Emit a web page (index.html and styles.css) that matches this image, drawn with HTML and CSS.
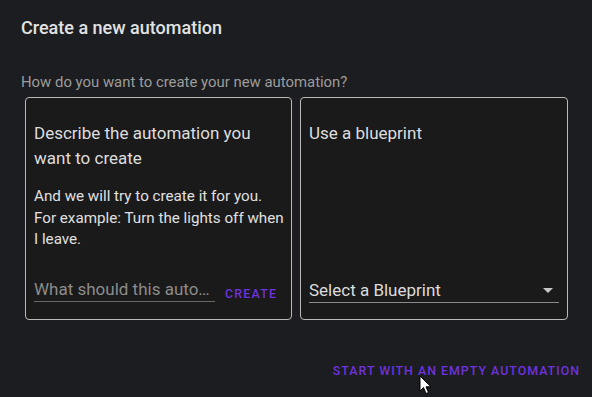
FILE: index.html
```html
<!DOCTYPE html>
<html>
    <head>
        <title>Create a new automation</title>
        <link rel="stylesheet" href="styles.css">
    </head>
<body>
    <div class="dialog">
        <h2 class="dialog-title">Create a new automation</h2>
        <p class="dialog-subtitle">How do you want to create your new automation?</p>

        <div class="options">
            <div class="option-card">
                <div class="card-heading">Describe the automation you want to create</div>
                <div class="card-text">And we will try to create it for you. For example: Turn the lights off when I leave.</div>
                <div class="card-footer">
                    <div class="text-field">What should this auto…</div>
                    <button class="text-button">CREATE</button>
                </div>
            </div>

            <div class="option-card">
                <div class="card-heading">Use a blueprint</div>
                <div class="card-footer">
                    <div class="select-field">
                        <span>Select a Blueprint</span>
                        <svg class="select-arrow" width="10" height="5" viewBox="0 0 10 5">
                            <path d="M0 0 L10 0 L5 5 Z" fill="#c8c8c8"/>
                        </svg>
                    </div>
                </div>
            </div>
        </div>

        <div class="dialog-actions">
            <button class="text-button empty-button">START WITH AN EMPTY AUTOMATION</button>
        </div>
    </div>

    <!-- mouse pointer in the screenshot -->
    <svg class="cursor" width="13" height="20" viewBox="0 0 13 20">
        <path d="M1 1 L1 16 L4.5 12.5 L7 18.5 L9.5 17.5 L7 11.8 L12 11.8 Z" fill="#ffffff" stroke="#000000" stroke-width="1"/>
    </svg>
</body>
</html>
```

FILE: styles.css
```css
body {
    margin: 0;
    padding: 0;
    background-color: #1c1d20;
    font-family: Roboto, "Noto Sans", sans-serif;
    width: 592px;
    height: 397px;
    overflow: hidden;
    position: relative;
}

.dialog {
    padding: 16px 24px 0 21px;
    display: flex;
    flex-direction: column;
}

.dialog-title {
    margin: 0;
    font-size: 18px;
    font-weight: 500;
    line-height: 24px;
    color: #e2e2e2;
}

.dialog-subtitle {
    margin: 32px 0 0 0;
    font-size: 14.9px;
    line-height: 20px;
    color: #9c9c9c;
}

.options {
    margin: 5px 0 0 4px;
    display: flex;
    gap: 8px;
}

.option-card {
    box-sizing: border-box;
    width: 267px;
    height: 223px;
    border: 1px solid #b9b9b9;
    border-radius: 4px;
    background: #1a1a1a;
    padding: 23px 8px 17px 8px;
    display: flex;
    flex-direction: column;
}

.option-card + .option-card {
    width: 268px;
}

.card-heading {
    font-size: 17px;
    line-height: 25px;
    color: #dedede;
}

.card-text {
    margin: 15px -4px 0 0;
    font-size: 15.2px;
    line-height: 21.5px;
    color: #e0e0e0;
}

.card-footer {
    margin-top: auto;
    display: flex;
    align-items: flex-end;
    gap: 10px;
}

.text-field {
    width: 181px;
    font-size: 17px;
    line-height: 22px;
    color: #8c8c8c;
    border-bottom: 1px solid #6a6660;
    padding-bottom: 1px;
    white-space: nowrap;
}

.text-button {
    background: none;
    border: none;
    padding: 0;
    font-family: Roboto, "Noto Sans", sans-serif;
    font-size: 12.4px;
    font-weight: 500;
    letter-spacing: 1px;
    color: #6f32dc;
    cursor: pointer;
}

.card-footer .text-button {
    margin-bottom: 1px;
    letter-spacing: 1.2px;
}

.select-field {
    flex: 1;
    display: flex;
    align-items: center;
    justify-content: space-between;
    font-size: 17px;
    line-height: 22px;
    color: #dcdcdc;
    border-bottom: 1px solid #8a8a8a;
    padding: 0 6px 1px 0;
    margin-bottom: -1px;
}

.dialog-actions {
    display: flex;
    justify-content: flex-end;
    margin: 43px -12px 0 0;
}

.empty-button {
    line-height: 16px;
}

.cursor {
    position: absolute;
    left: 419px;
    top: 375px;
}
```
